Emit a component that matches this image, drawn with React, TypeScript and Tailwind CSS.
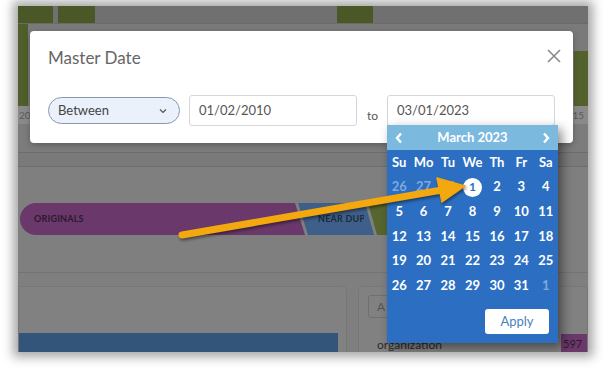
const font = { fontFamily: "Lato, 'Open Sans', sans-serif" };

const weeks: { d: number; muted?: boolean; selected?: boolean }[][] = [
  [{ d: 26, muted: true }, { d: 27, muted: true }, { d: 28, muted: true }, { d: 1, selected: true }, { d: 2 }, { d: 3 }, { d: 4 }],
  [{ d: 5 }, { d: 6 }, { d: 7 }, { d: 8 }, { d: 9 }, { d: 10 }, { d: 11 }],
  [{ d: 12 }, { d: 13 }, { d: 14 }, { d: 15 }, { d: 16 }, { d: 17 }, { d: 18 }],
  [{ d: 19 }, { d: 20 }, { d: 21 }, { d: 22 }, { d: 23 }, { d: 24 }, { d: 25 }],
  [{ d: 26 }, { d: 27 }, { d: 28 }, { d: 29 }, { d: 30 }, { d: 31 }, { d: 1, muted: true }],
];

const dayNames = ["Su", "Mo", "Tu", "We", "Th", "Fr", "Sa"];

function Backdrop() {
  return (
    <div className="flex flex-col h-full bg-[#7f7f7f]">
      {/* top strip */}
      <div className="h-[17px] bg-[#707070] flex shrink-0">
        <div className="w-[35px] bg-[#4a5828]" />
        <div className="w-[5px]" />
        <div className="w-[37px] bg-[#4a5828]" />
        <div className="w-[242px]" />
        <div className="w-[36px] bg-[#4a5828]" />
      </div>
      {/* chart area */}
      <div className="h-[83px] bg-[#7a7a7a] flex justify-between shrink-0 border-t border-[#6a6a6a]">
        <div className="w-[10px] bg-[#4f5e2b]" />
        <div className="w-[14px] mt-[27px] bg-[#53622d]" />
      </div>
      {/* axis labels */}
      <div className="h-[18px] bg-[#8a8a8a] flex justify-between items-center text-[10px] text-[#5a5a5a] shrink-0 pl-[1px]">
        <span>200</span>
        <span className="mr-[4px]">15</span>
      </div>
      <div className="h-[29px] bg-[#7c7c7c] border-b border-[#6c6c6c] shrink-0" />
      <div className="h-[14px] bg-[#7a7a7a] border-b border-[#6e6e6e] shrink-0" />
      {/* segmented bar */}
      <div className="h-[106px] border-b border-[#747474] pt-[36px] shrink-0 relative">
        <svg width="400" height="32" className="block ml-[2px]">
          <path d="M16 0 H275 L285 32 H16 A16 16 0 0 1 16 0 Z" fill="#6a386a" />
          <polygon points="278,0 345,0 354,32 288,32" fill="#3e5f8a" />
          <polygon points="348,0 400,0 400,32 357,32" fill="#56662e" />
        </svg>
        <span className="absolute left-[16px] top-[45px] text-[9px] font-bold text-[#2a1a2a] tracking-wide">
          ORIGINALS
        </span>
        <span className="absolute left-[300px] top-[45px] text-[9px] font-bold text-[#1d2a3a] tracking-wide w-[46px] overflow-hidden whitespace-nowrap">
          NEAR DUP
        </span>
      </div>
      {/* cards */}
      <div className="flex gap-[11px] pt-[13px] flex-1">
        <div className="w-[329px] bg-[#818181] border border-[#777] rounded-tr-[4px] flex flex-col">
          <div className="h-[46px]" />
          <div className="h-[24px] w-[319px] bg-[#34557a]" />
        </div>
        <div className="flex-1 bg-[#818181] border border-[#777] rounded-tl-[4px] relative">
          <div className="mt-[8px] ml-[9px] w-[60px] h-[23px] border border-[#6f6f6f] rounded-[3px] text-[12px] text-[#555] pl-[8px] leading-[21px]">
            A
          </div>
          <div className="mt-[18px] ml-[18px] text-[12px] text-[#2a2a2a]">organization</div>
          <div className="absolute right-0 top-[47px] w-[26px] h-[20px] bg-[#6a386a] text-[11px] text-[#2a1a2a] pl-[2px] leading-[20px]">
            597
          </div>
        </div>
      </div>
    </div>
  );
}

function Calendar() {
  return (
    <div className="absolute left-[369px] top-[119px] w-[171px] h-[218px] bg-[#2c6fc2] shadow-[4px_4px_10px_rgba(0,0,0,0.45)] flex flex-col">
      <div className="h-[25px] bg-[#7cb9df] flex items-center justify-between px-[8px] text-white font-bold">
        <svg width="8" height="12" viewBox="0 0 8 12">
          <path d="M6 1.5 L2 6 L6 10.5" stroke="white" strokeWidth="2.4" fill="none" />
        </svg>
        <span className="text-[13px]">March 2023</span>
        <svg width="8" height="12" viewBox="0 0 8 12">
          <path d="M2 1.5 L6 6 L2 10.5" stroke="white" strokeWidth="2.4" fill="none" />
        </svg>
      </div>
      <div className="grid grid-cols-7 text-white font-bold text-[13px]">
        {dayNames.map((n) => (
          <div key={n} className="h-[24.7px] flex items-center justify-center">
            {n}
          </div>
        ))}
        {weeks.flat().map((c, i) => (
          <div key={i} className="h-[24.7px] flex items-center justify-center">
            {c.selected ? (
              <span className="w-[19px] h-[19px] rounded-full bg-white text-[#2c6fc2] flex items-center justify-center text-[12px]">
                {c.d}
              </span>
            ) : (
              <span className={c.muted ? "text-[#7fa9dc]" : ""}>{c.d}</span>
            )}
          </div>
        ))}
      </div>
      <div className="flex justify-end pr-[9px] pt-[11px]">
        <button className="w-[64px] h-[25px] bg-white rounded-[3px] text-[13px] text-[#4a7fc0]">
          Apply
        </button>
      </div>
    </div>
  );
}

function Modal() {
  return (
    <div className="absolute left-[12px] top-[25px] w-[543px] h-[112px] bg-white rounded-[4px] shadow-[0_2px_6px_rgba(0,0,0,0.25)] px-[18px] pt-[15px]">
      <div className="flex justify-between items-start">
        <h2 className="text-[17px] leading-[24px] text-[#666]">Master Date</h2>
        <svg width="14" height="14" viewBox="0 0 14 14" className="mt-[3px] -mr-[6px]">
          <path d="M1 1 L13 13 M13 1 L1 13" stroke="#8a8a8a" strokeWidth="1.6" />
        </svg>
      </div>
      <div className="flex items-center mt-[25px]">
        <div className="w-[132px] h-[27px] rounded-full bg-[#eaf1fb] border border-[#8898ab] flex items-center justify-between pl-[9px] pr-[12px] text-[13px] text-[#444]">
          <span>Between</span>
          <svg width="8" height="6" viewBox="0 0 8 6">
            <path d="M1 1.5 L4 4.5 L7 1.5" stroke="#555" strokeWidth="1.2" fill="none" />
          </svg>
        </div>
        <div className="ml-[9px] w-[168px] h-[31px] border border-[#d6d6d6] rounded-[3px] flex items-center pl-[9px] text-[13px] text-[#555]">
          01/02/2010
        </div>
        <span className="ml-[10px] mt-[10px] text-[12px] text-[#555]">to</span>
        <div className="ml-[9px] w-[168px] h-[31px] border border-[#d6d6d6] rounded-[3px] flex items-center pl-[9px] text-[13px] text-[#555]">
          03/01/2023
        </div>
      </div>
    </div>
  );
}

export default function App() {
  return (
    <div className="w-[603px] h-[375px] bg-white relative overflow-hidden" style={font}>
      <div className="ml-[18px] mt-[6px] w-[570px] h-[346px] relative overflow-hidden shadow-[0_0_10px_5px_rgba(0,0,0,0.35)]">
        <Backdrop />
        <Modal />
        <Calendar />
      </div>
      <svg
        width="603"
        height="375"
        className="absolute inset-0 pointer-events-none"
        style={{ filter: "drop-shadow(1px 2px 1.5px rgba(0,0,0,0.45))" }}
      >
        <line x1="182" y1="235" x2="442" y2="190" stroke="#f2a80e" strokeWidth="7" strokeLinecap="round" />
        <polygon points="465,186 437,178 442,202" fill="#f2a80e" stroke="#f2a80e" strokeWidth="1.5" strokeLinejoin="round" />
      </svg>
    </div>
  );
}
